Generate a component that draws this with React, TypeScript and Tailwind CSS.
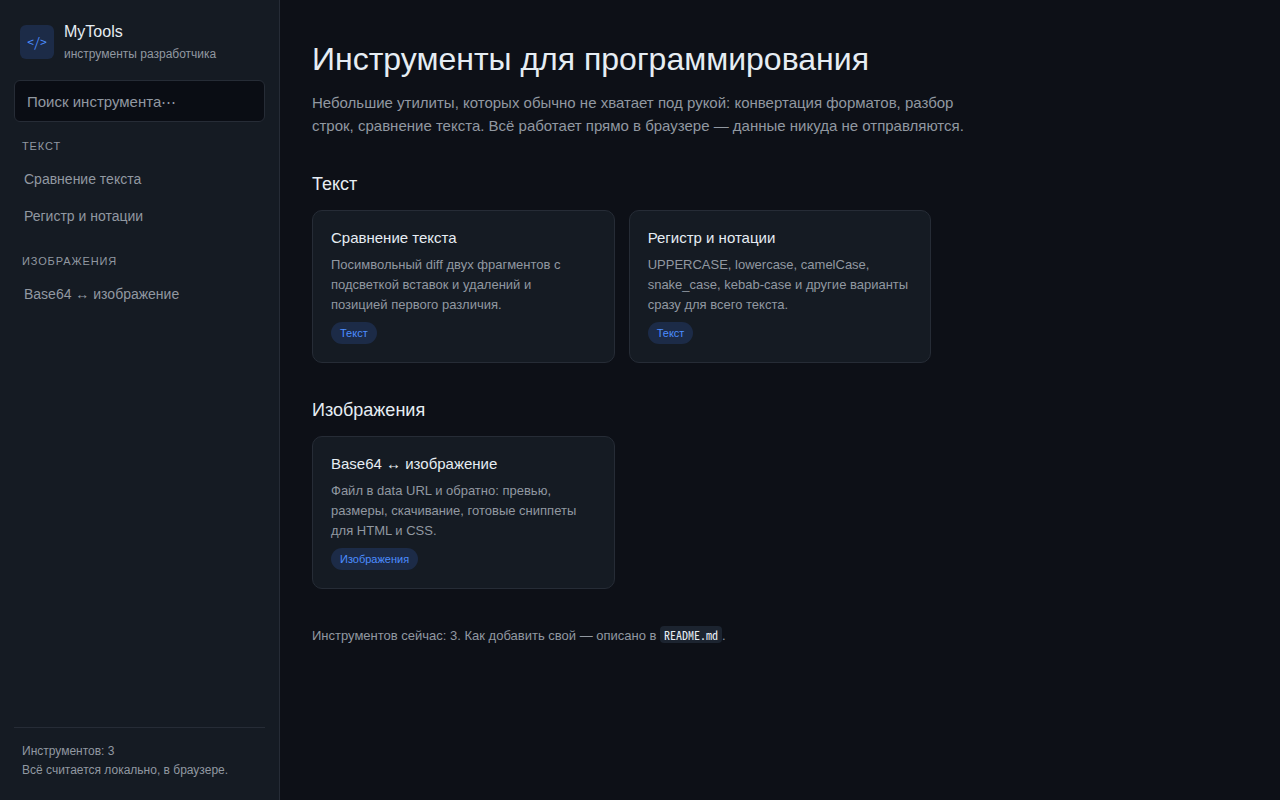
type Tool = { title: string; desc: string };

const groups: { name: string; tools: Tool[] }[] = [
  {
    name: "Текст",
    tools: [
      {
        title: "Сравнение текста",
        desc: "Посимвольный diff двух фрагментов с подсветкой вставок и удалений и позицией\u00a0первого различия.",
      },
      {
        title: "Регистр и нотации",
        desc: "UPPERCASE, lowercase, camelCase, snake_case, kebab-case и другие варианты сразу для всего текста.",
      },
    ],
  },
  {
    name: "Изображения",
    tools: [
      {
        title: "Base64 ↔ изображение",
        desc: "Файл в data URL и обратно: превью, размеры, скачивание, готовые сниппеты для HTML и CSS.",
      },
    ],
  },
];

const Sidebar = () => {
  return (
    <aside className="flex w-[280px] shrink-0 flex-col border-r border-[#262c36] bg-[#151b23] px-[14px] py-5">
      <a href="#" className="flex items-center gap-[10px] px-[6px]">
        <span className="flex size-[34px] items-center justify-center rounded-md bg-[#1c2b47] font-['Noto_Sans_Mono_CJK_SC','Liberation_Mono',monospace] text-[13px] text-[#4c8dff]">
          &lt;/&gt;
        </span>
        <span className="flex flex-col">
          <span className="text-base leading-6 text-[#e6edf3]">MyTools</span>
          <span className="text-xs leading-5 text-[#9198a1]">инструменты разработчика</span>
        </span>
      </a>

      <input
        type="search"
        aria-label="Поиск инструмента"
        placeholder="Поиск инструмента⋯"
        className="mt-4 h-[42px] w-full rounded-md border border-[#262c36] bg-[#0a0d14] px-3 text-[15px] text-[#e6edf3] placeholder:text-[#9198a1]"
      />

      <nav className="mt-4 flex flex-col gap-[19px]">
        {groups.map((group) => (
          <div key={group.name}>
            <h2 className="mb-[7px] px-2 text-[11px] leading-4 tracking-[0.08em] text-[#9198a1] uppercase">
              {group.name}
            </h2>
            <ul className="flex flex-col gap-px">
              {group.tools.map((tool) => (
                <li key={tool.title}>
                  <a
                    href="#"
                    className="flex h-9 items-center rounded-md px-[10px] text-sm text-[#9198a1] hover:bg-[#1c2430]"
                  >
                    {tool.title}
                  </a>
                </li>
              ))}
            </ul>
          </div>
        ))}
      </nav>

      <div className="mt-auto border-t border-[#262c36] px-2 pt-[14px] text-xs leading-[19px] text-[#9198a1]">
        <p>Инструментов: 3</p>
        <p>Всё считается локально, в браузере.</p>
      </div>
    </aside>
  );
};

const ToolCard = ({ tool, tag }: { tool: Tool; tag: string }) => {
  return (
    <a
      href="#"
      className="flex flex-col items-start rounded-[10px] border border-[#262c36] bg-[#151b23] p-[18px] hover:border-[#4c8dff]"
    >
      <h3 className="text-[15px] leading-[17px] text-[#e6edf3]">{tool.title}</h3>
      <p className="mt-[9px] text-[13px] leading-5 text-[#9198a1]">{tool.desc}</p>
      <span className="mt-[7px] rounded-full bg-[#1c2b47] px-[9px] text-[11px] leading-[22px] text-[#4c8dff]">
        {tag}
      </span>
    </a>
  );
};

function App() {
  return (
    <div className="flex min-h-screen bg-[#0d1017] font-['Liberation_Sans',Arial,sans-serif]">
      <Sidebar />

      <main className="flex-1 px-8 py-10">
        <h1 className="text-[32px] leading-[38px] text-[#e6edf3]">
          Инструменты для программирования
        </h1>
        <p className="mt-[13px] max-w-[680px] text-[15px] leading-[23px] text-[#9198a1]">
          Небольшие утилиты, которых обычно не хватает под рукой: конвертация форматов, разбор
          строк, сравнение текста. Всё работает прямо в браузере — данные никуда не отправляются.
        </p>

        {groups.map((group) => (
          <section key={group.name} className="mt-[35px]">
            <h2 className="mb-[14px] text-lg leading-6 text-[#e6edf3]">{group.name}</h2>
            <div className="grid grid-cols-[repeat(auto-fill,minmax(260px,1fr))] gap-[14px]">
              {group.tools.map((tool) => (
                <ToolCard key={tool.title} tool={tool} tag={group.name} />
              ))}
            </div>
          </section>
        ))}

        <p className="mt-[37px] text-[13px] leading-5 text-[#9198a1]">
          Инструментов сейчас: 3. Как добавить свой — описано в{" "}
          <code className="rounded bg-[#1c2430] px-1 font-['Noto_Sans_Mono_CJK_SC','Liberation_Mono',monospace] text-xs text-[#e6edf3]">
            README.md
          </code>
          .
        </p>
      </main>
    </div>
  );
}

export default App;
